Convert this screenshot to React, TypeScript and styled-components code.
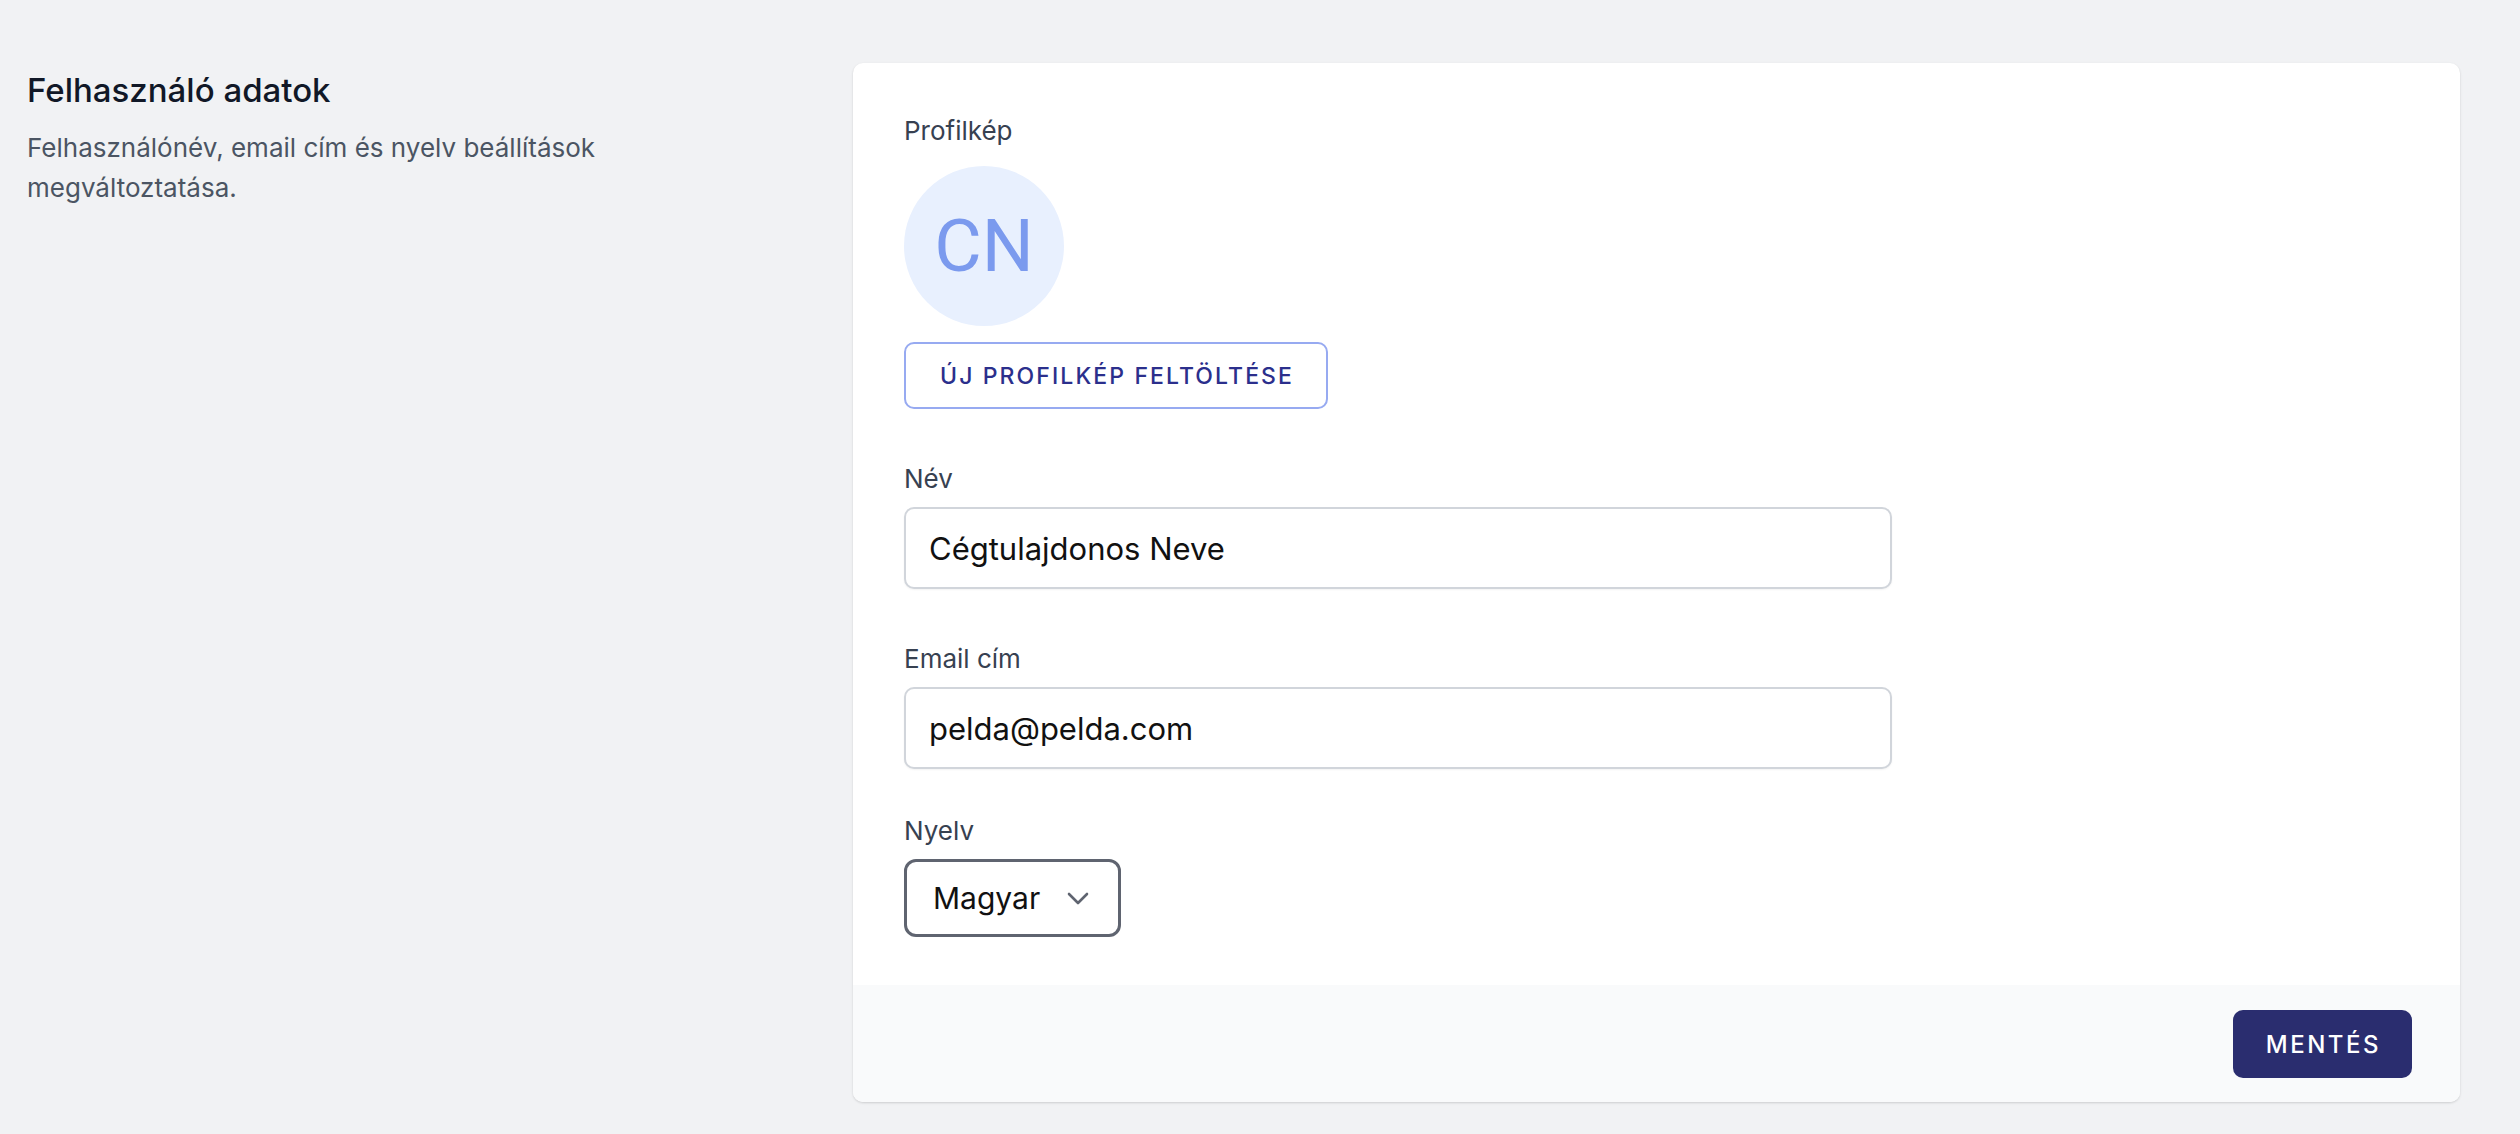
import React, { useState } from 'react';
import styled, { createGlobalStyle } from 'styled-components';

const GlobalStyle = createGlobalStyle`
  html, body {
    margin: 0;
    padding: 0;
    background: #f1f2f4;
    font-family: Inter, "Noto Sans", "Liberation Sans", sans-serif;
  }
  * {
    box-sizing: border-box;
  }
`;

const Page = styled.div`
  display: grid;
  grid-template-columns: 786px 1607px;
  column-gap: 40px;
  align-items: start;
  min-height: 1134px;
  padding: 63px 0 0 27px;
`;

const Intro = styled.div`
  padding: 4px 120px 0 0;
`;

const Title = styled.h3`
  margin: 0;
  font-size: 33px;
  line-height: 46px;
  font-weight: 500;
  color: #111827;
`;

const Description = styled.p`
  margin: 15px 0 0;
  font-size: 26px;
  line-height: 40px;
  color: #4b5563;
`;

const Card = styled.div`
  background: #ffffff;
  border-radius: 10px;
  box-shadow: 0 1px 3px rgba(0, 0, 0, 0.1), 0 1px 2px rgba(0, 0, 0, 0.06);
  overflow: hidden;
`;

const CardBody = styled.div`
  display: flex;
  flex-direction: column;
  padding: 48px 51px 48px;
`;

const Field = styled.div<{ $top?: number }>`
  display: flex;
  flex-direction: column;
  align-items: flex-start;
  margin-top: ${(p) => p.$top ?? 0}px;
`;

const Label = styled.label`
  display: block;
  font-size: 26px;
  line-height: 39px;
  color: #374151;
`;

const Avatar = styled.div`
  margin-top: 16px;
  width: 160px;
  height: 160px;
  border-radius: 50%;
  background: #e8f0fe;
  color: #7b9aee;
  display: flex;
  align-items: center;
  justify-content: center;
  font-family: Roboto, "Liberation Sans", sans-serif;
  font-size: 73px;
  line-height: 1;
`;

const UploadButton = styled.button`
  margin-top: 16px;
  height: 67px;
  padding: 0 32px 0 34px;
  background: #ffffff;
  border: 2px solid #97aaf1;
  border-radius: 10px;
  color: #2b2f8c;
  font-family: inherit;
  font-size: 23px;
  font-weight: 500;
  letter-spacing: 2.1px;
  text-transform: uppercase;
  cursor: pointer;
`;

const TextInput = styled.input`
  margin-top: 9px;
  width: 988px;
  height: 82px;
  padding: 0 23px;
  border: 2px solid #d1d5db;
  border-radius: 10px;
  box-shadow: 0 1px 2px rgba(0, 0, 0, 0.05);
  font-family: inherit;
  font-size: 31px;
  color: #111111;
  outline: none;
`;

const SelectBox = styled.div`
  margin-top: 9px;
  width: 217px;
  height: 78px;
  display: flex;
  align-items: center;
  gap: 8px;
  padding: 0 29px 0 26px;
  border: 3px solid #5f6470;
  border-radius: 12px;
  background: #ffffff;
`;

const Select = styled.select`
  flex: 1;
  min-width: 0;
  appearance: none;
  border: none;
  background: transparent;
  padding: 0;
  font-family: inherit;
  font-size: 30px;
  color: #111111;
  outline: none;
  cursor: pointer;
`;

const Footer = styled.div`
  display: flex;
  justify-content: flex-end;
  padding: 25px 48px 24px;
  background: #f9fafb;
`;

const SaveButton = styled.button`
  height: 68px;
  padding: 0 31px 0 33px;
  border: none;
  border-radius: 10px;
  background: #2a2d6f;
  color: #ffffff;
  font-family: inherit;
  font-size: 24px;
  font-weight: 500;
  letter-spacing: 2.5px;
  text-transform: uppercase;
  cursor: pointer;
`;

const Chevron = () => (
  <svg width="22" height="13" viewBox="0 0 22 13" fill="none">
    <path d="M2 2l9 9 9-9" stroke="#5f6470" strokeWidth="2.6" strokeLinecap="round" strokeLinejoin="round" />
  </svg>
);

const App: React.FC = () => {
  const [name, setName] = useState('Cégtulajdonos Neve');
  const [email, setEmail] = useState('pelda@pelda.com');
  const [lang, setLang] = useState('hu');

  return (
    <>
      <GlobalStyle />
      <Page>
        <Intro>
          <Title>Felhasználó adatok</Title>
          <Description>Felhasználónév, email cím és nyelv beállítások megváltoztatása.</Description>
        </Intro>

        <Card>
          <CardBody>
            <Field>
              <Label>Profilkép</Label>
              <Avatar>CN</Avatar>
              <UploadButton type="button">Új profilkép feltöltése</UploadButton>
            </Field>

            <Field $top={50}>
              <Label htmlFor="name">Név</Label>
              <TextInput id="name" value={name} onChange={(e) => setName(e.target.value)} />
            </Field>

            <Field $top={50}>
              <Label htmlFor="email">Email cím</Label>
              <TextInput id="email" value={email} onChange={(e) => setEmail(e.target.value)} />
            </Field>

            <Field $top={42}>
              <Label htmlFor="lang">Nyelv</Label>
              <SelectBox>
                <Select id="lang" value={lang} onChange={(e) => setLang(e.target.value)}>
                  <option value="hu">Magyar</option>
                  <option value="en">English</option>
                </Select>
                <Chevron />
              </SelectBox>
            </Field>
          </CardBody>

          <Footer>
            <SaveButton type="button">Mentés</SaveButton>
          </Footer>
        </Card>
      </Page>
    </>
  );
};

export default App;
